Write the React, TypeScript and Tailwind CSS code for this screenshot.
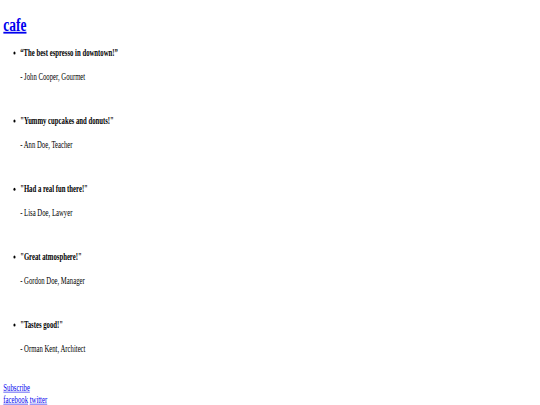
import React from 'react';

interface Review {
  quote: string;
  author: string;
}

const reviews: Review[] = [
  { quote: '\u201CThe best espresso in downtown!\u201D', author: '- John Cooper, Gourmet' },
  { quote: '"Yummy cupcakes and donuts!"', author: '- Ann Doe, Teacher' },
  { quote: '"Had a real fun there!"', author: '- Lisa Doe, Lawyer' },
  { quote: '"Great atmosphere!"', author: '- Gordon Doe, Manager' },
  { quote: '"Tastes good!"', author: '- Orman Kent, Architect' },
];

export default function App() {
  return (
    <div className="w-[540px] h-[405px] overflow-hidden bg-white text-black font-['Liberation_Serif',serif]">
      {/* the shot is squeezed: lay out at full size, then scale down */}
      <div className="flow-root w-[1286px] origin-top-left scale-x-[0.42] scale-y-[0.6] pl-[8px]">
        <h1 className="mt-[21.6px] text-[32px] leading-[36.8px] font-bold">
          <a href="#" className="text-[#0000ee] underline">cafe</a>
        </h1>
        <ul className="list-disc pl-[40px] mt-[20.7px] text-[16px] leading-[18.4px]">
          {reviews.map((r, i) => (
            <li key={r.author} className={i > 0 ? 'mt-[54.9px]' : ''}>
              <p className="font-bold">{r.quote}</p>
              <p className="mt-[21.6px]">{r.author}</p>
            </li>
          ))}
        </ul>
        <div className="mt-[46.7px] text-[16px] leading-[20px]">
          <a href="#" className="text-[#0000ee] underline">Subscribe</a>
          <br />
          <a href="#" className="text-[#0000ee] underline">facebook</a>{' '}
          <a href="#" className="text-[#0000ee] underline">twitter</a>
        </div>
      </div>
    </div>
  );
}
